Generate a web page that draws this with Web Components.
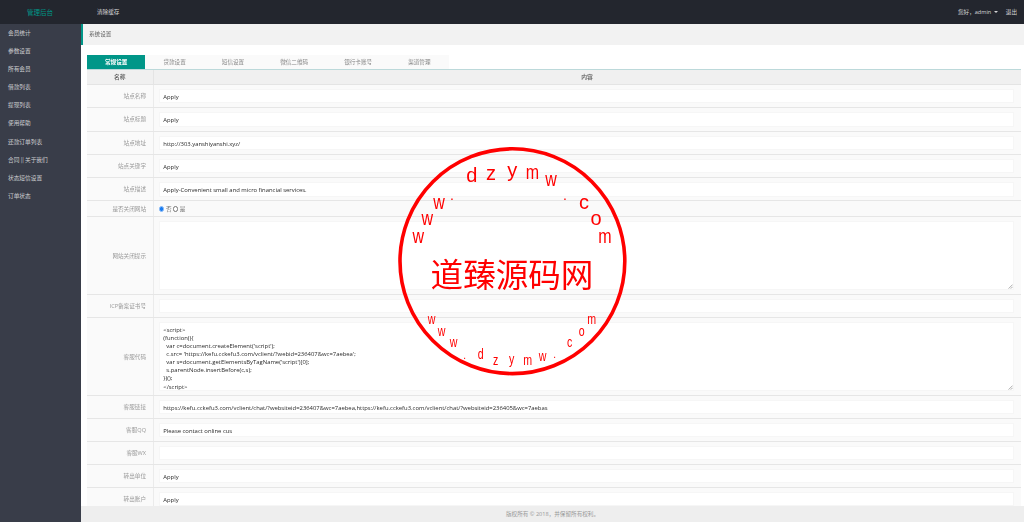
<!DOCTYPE html>
<html lang="zh">
<head>
<meta charset="utf-8">
<title>管理后台</title>
<style>
  html, body { margin: 0; height: 100%; overflow: hidden; background: #fff; }
  body { font-family: "Open Sans", "Noto Sans CJK SC", sans-serif; font-size: 5.6px; }
</style>
</head>
<body>
<admin-app>
  <admin-header slot="header"></admin-header>
  <admin-sidebar slot="sidebar"></admin-sidebar>
  <page-crumb>系统设置</page-crumb>
  <setting-tabs></setting-tabs>
  <setting-table>
    <setting-row label="站点名称" h="23.3"><text-field>Apply</text-field></setting-row>
    <setting-row label="站点标题" h="23.3"><text-field>Apply</text-field></setting-row>
    <setting-row label="站点地址" h="23.3"><text-field>http://303.yanshiyanshi.xyz/</text-field></setting-row>
    <setting-row label="站点关键字" h="23.3"><text-field>Apply</text-field></setting-row>
    <setting-row label="站点描述" h="23.3"><text-field>Apply-Convenient small and micro financial services.</text-field></setting-row>
    <setting-row label="是否关闭网站" h="15.8"><radio-pair></radio-pair></setting-row>
    <setting-row label="网站关闭提示" h="78"><text-field multi style="height:69.4px"></text-field></setting-row>
    <setting-row label="ICP备案证书号" h="23"><text-field></text-field></setting-row>
    <setting-row label="客服代码" h="77.7"><text-field multi style="height:69.6px">&lt;script&gt;
(function(){
  var c=document.createElement('script');
  c.src= 'https://kefu.cckefu3.com/vclient/?webid=236407&amp;wc=7aebea';
  var s=document.getElementsByTagName('script')[0];
  s.parentNode.insertBefore(c,s);
})();
&lt;/script&gt;</text-field></setting-row>
    <setting-row label="客服链接" h="23"><text-field>https://kefu.cckefu3.com/vclient/chat/?websiteid=236407&amp;wc=7aebea,https://kefu.cckefu3.com/vclient/chat/?websiteid=236405&amp;wc=7aebas</text-field></setting-row>
    <setting-row label="客服QQ" h="23.2"><text-field>Please contact online cus</text-field></setting-row>
    <setting-row label="客服WX" h="23"><text-field></text-field></setting-row>
    <setting-row label="转出单位" h="23"><text-field>Apply</text-field></setting-row>
    <setting-row label="转出账户" h="23"><text-field>Apply</text-field></setting-row>
  </setting-table>
  <admin-footer slot="footer"></admin-footer>
</admin-app>
<site-stamp></site-stamp>

<script>
const CJK = '"Noto Sans CJK SC", sans-serif';

class AdminApp extends HTMLElement {
  connectedCallback() {
    this.attachShadow({ mode: 'open' });
    this.shadowRoot.innerHTML = `
      <style>
        :host {
          display: grid;
          grid-template-columns: 81px 1fr;
          grid-template-rows: 23.5px 1fr;
          width: 1024px;
          height: 522px;
          overflow: hidden;
          filter: blur(.35px);
        }
        .top { grid-column: 1 / 3; }
        .main {
          display: grid;
          grid-template-rows: 1fr 16.3px;
          min-height: 0;
          min-width: 0;
        }
        .scroll { overflow: hidden; min-height: 0; }
      </style>
      <div class="top"><slot name="header"></slot></div>
      <slot name="sidebar"></slot>
      <div class="main">
        <div class="scroll"><slot></slot></div>
        <slot name="footer"></slot>
      </div>
    `;
  }
}

class AdminHeader extends HTMLElement {
  connectedCallback() {
    this.attachShadow({ mode: 'open' });
    this.shadowRoot.innerHTML = `
      <style>
        :host {
          display: flex;
          align-items: center;
          height: 23.5px;
          background: #23262e;
          color: rgba(255,255,255,.8);
          font: 5.6px ${CJK};
        }
        .logo { width: 81px; padding-left: 27px; box-sizing: border-box; font-size: 6.5px; color: #009688; }
        .clear { margin-left: 16px; }
        .right { margin-left: auto; display: flex; align-items: center; padding-right: 7px; }
        .user { font-family: "Open Sans", ${CJK}; }
        .caret { width: 0; height: 0; margin: 1px 8px 0 2.5px; border: 2.4px solid transparent; border-top-color: rgba(255,255,255,.8); border-bottom: 0; }
      </style>
      <div class="logo">管理后台</div>
      <div class="clear">清除缓存</div>
      <div class="right">
        <span class="user">您好，admin</span><span class="caret"></span><span>退出</span>
      </div>
    `;
  }
}

class AdminSidebar extends HTMLElement {
  connectedCallback() {
    const items = ['会员统计', '参数设置', '所有会员', '借款列表', '提现列表', '使用帮助', '还款订单列表', '合同 || 关于我们', '状态短信设置', '订单状态'];
    this.attachShadow({ mode: 'open' });
    this.shadowRoot.innerHTML = `
      <style>
        :host {
          display: block;
          background: #393d49;
          color: rgba(255,255,255,.75);
          font: 5.7px ${CJK};
        }
        div { height: 18.2px; line-height: 18.2px; padding-left: 8px; white-space: nowrap; }
      </style>
      ${items.map(t => `<div>${t}</div>`).join('')}
    `;
  }
}

class PageCrumb extends HTMLElement {
  connectedCallback() {
    this.attachShadow({ mode: 'open' });
    this.shadowRoot.innerHTML = `
      <style>
        :host {
          display: flex;
          align-items: center;
          height: 21px;
          box-sizing: border-box;
          padding-left: 6px;
          background: #f2f2f2;
          border-left: 2px solid #009688;
          color: #666;
          font: 5.6px ${CJK};
        }
      </style>
      <slot></slot>
    `;
  }
}

class SettingTabs extends HTMLElement {
  connectedCallback() {
    const tabs = ['常规设置', '贷款设置', '短信设置', '微信二维码', '银行卡账号', '渠道管理'];
    this.attachShadow({ mode: 'open' });
    this.shadowRoot.innerHTML = `
      <style>
        :host {
          display: flex;
          margin: 10.5px 3.3px 0 6px;
          height: 15px;
          box-sizing: border-box;
          border-bottom: 1px solid #bcd9da;
          font: 5.6px ${CJK};
        }
        div {
          padding: 0 18px;
          line-height: 14px;
          background: #fafafa;
          color: #888;
        }
        .on { background: #009688; color: #fff; font-weight: 700; }
      </style>
      ${tabs.map((t, i) => `<div class="${i ? '' : 'on'}">${t}</div>`).join('')}
    `;
  }
}

class SettingTable extends HTMLElement {
  connectedCallback() {
    this.attachShadow({ mode: 'open' });
    this.shadowRoot.innerHTML = `
      <style>
        :host { display: block; margin: 0 3.3px 0 6px; }
        .head {
          display: grid;
          grid-template-columns: 65.5px 1fr;
          height: 15px;
          background: #f0f0f0;
          border-bottom: 1px solid #e4e4e4;
          box-sizing: border-box;
          color: #555;
          font: 500 5.8px/14px ${CJK};
          text-align: center;
        }
        .head div + div { border-left: 1px solid #e4e4e4; }
      </style>
      <div class="head"><div>名称</div><div>内容</div></div>
      <slot></slot>
    `;
  }
}

class SettingRow extends HTMLElement {
  connectedCallback() {
    this.attachShadow({ mode: 'open' });
    this.shadowRoot.innerHTML = `
      <style>
        :host {
          display: grid;
          grid-template-columns: 65.5px 1fr;
          box-sizing: border-box;
          height: ${this.getAttribute('h')}px;
          background: #fafafa;
          border-bottom: 1px solid #e6e6e6;
        }
        .label {
          display: flex;
          align-items: center;
          justify-content: flex-end;
          padding-right: 6.5px;
          color: #999;
          font: 5.6px "Open Sans", ${CJK};
        }
        .value {
          display: flex;
          align-items: center;
          padding: 0 6.4px 0 5.6px;
          border-left: 1px solid #ebebeb;
          min-width: 0;
        }
      </style>
      <div class="label">${this.getAttribute('label')}</div>
      <div class="value"><slot></slot></div>
    `;
  }
}

class TextField extends HTMLElement {
  connectedCallback() {
    const multi = this.hasAttribute('multi');
    this.attachShadow({ mode: 'open' });
    this.shadowRoot.innerHTML = `
      <style>
        :host {
          display: block;
          position: relative;
          flex: 1;
          min-width: 0;
          height: 14.4px;
          box-sizing: border-box;
          background: #fff;
          border: .5px solid #f6f6f6;
          color: #2a2a2a;
          font: 5.9px/${multi ? '8.1px' : '14.4px'} "Open Sans", ${CJK};
          overflow: hidden;
        }
        .text { padding: ${multi ? '3.1px' : '0'} 3.2px 0; white-space: ${multi ? 'pre' : 'nowrap'}; }
        svg { position: absolute; right: .5px; bottom: .5px; width: 5px; height: 5px; display: ${multi ? 'block' : 'none'}; }
      </style>
      <div class="text"><slot></slot></div>
      <svg viewBox="0 0 5 5"><path d="M4.6 .6 .6 4.6M4.6 2.8 2.8 4.6" stroke="#888" stroke-width=".7" fill="none"/></svg>
    `;
  }
}

class RadioPair extends HTMLElement {
  connectedCallback() {
    this.attachShadow({ mode: 'open' });
    this.shadowRoot.innerHTML = `
      <style>
        :host {
          display: flex;
          align-items: center;
          color: #777;
          font: 5.6px ${CJK};
        }
        i { display: block; box-sizing: border-box; width: 5.4px; height: 5.4px; border-radius: 50%; margin-right: 1.4px; }
        .on { background: #1a7cf0; border: 1.1px solid #8ebdf7; }
        .off { background: #fff; border: .6px solid #777; margin-left: 1.6px; }
      </style>
      <i class="on"></i><span>否</span><i class="off"></i><span>是</span>
    `;
  }
}

class AdminFooter extends HTMLElement {
  connectedCallback() {
    this.attachShadow({ mode: 'open' });
    this.shadowRoot.innerHTML = `
      <style>
        :host {
          display: flex;
          align-items: center;
          justify-content: center;
          background: #eee;
          color: #999;
          font: 5.6px "Open Sans", ${CJK};
        }
      </style>
      版权所有 © 2018，并保留所有权利。
    `;
  }
}

class SiteStamp extends HTMLElement {
  connectedCallback() {
    // x, baseline, letter
    const big = [[418.3,243.3,'w'],[427.3,225,'w'],[439,208.7,'w'],[471.7,182.3,'d'],[491,180,'z'],[512.3,176.7,'y'],[532.3,179.3,'m'],[551,185.7,'w'],[584,209,'c'],[596,225,'o'],[605,242.7,'m']];
    const small = [[431.7,324,'w'],[441.7,336,'w'],[453.7,347.3,'w'],[480.7,359,'d'],[495.7,365,'z'],[511.7,364.3,'y'],[527.7,365,'m'],[542.7,361,'w'],[569.7,347.3,'c'],[581.7,336,'o'],[591.7,324,'m']];
    const dots = [[452,199.6,14],[565,199.6,14],[464.7,358.6,10],[554.7,358,10]];
    const letter = (x, y, c, size, sx) => `<text transform="translate(${x} ${y}) scale(${sx} 1)" font-size="${size}">${c}</text>`;
    this.attachShadow({ mode: 'open' });
    this.shadowRoot.innerHTML = `
      <style>
        :host { position: absolute; left: 0; top: 0; width: 1024px; height: 522px; pointer-events: none; }
        svg { display: block; }
        text { fill: #f00; font-family: "Liberation Sans", sans-serif; text-anchor: middle; }
        .name { font-family: ${CJK}; font-size: 32.6px; }
      </style>
      <svg width="1024" height="522" viewBox="0 0 1024 522">
        <circle cx="512.4" cy="261.2" r="112.4" fill="none" stroke="#f00" stroke-width="3.6"/>
        ${big.map(l => letter(l[0], l[1], l[2], 20, l[2] === 'w' || l[2] === 'm' ? .8 : 1)).join('')}
        ${small.map(l => letter(l[0], l[1], l[2], 14, .76)).join('')}
        ${dots.map(d => letter(d[0], d[1], '.', d[2], 1)).join('')}
        <text class="name" x="512" y="286.5">道臻源码网</text>
      </svg>
    `;
  }
}

customElements.define('admin-app', AdminApp);
customElements.define('admin-header', AdminHeader);
customElements.define('admin-sidebar', AdminSidebar);
customElements.define('page-crumb', PageCrumb);
customElements.define('setting-tabs', SettingTabs);
customElements.define('setting-table', SettingTable);
customElements.define('setting-row', SettingRow);
customElements.define('text-field', TextField);
customElements.define('radio-pair', RadioPair);
customElements.define('admin-footer', AdminFooter);
customElements.define('site-stamp', SiteStamp);
</script>
</body>
</html>
